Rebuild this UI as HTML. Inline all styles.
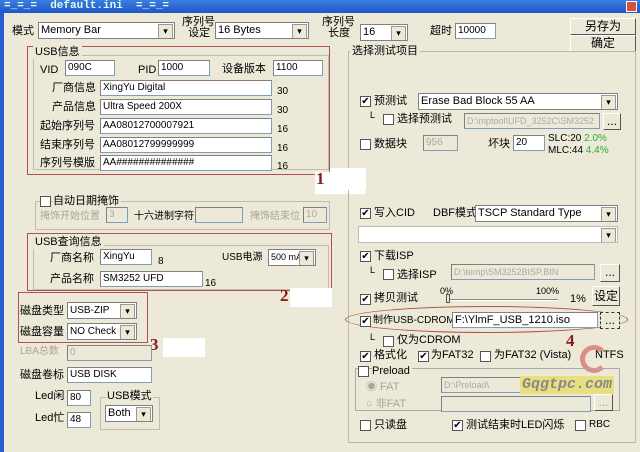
<!DOCTYPE html><html><head><meta charset="utf-8"><style>
*{box-sizing:border-box;margin:0;padding:0}
body{width:640px;height:452px;background:#ece9d8;position:relative;overflow:hidden;font-family:"Liberation Sans","Noto Sans CJK SC",sans-serif;font-size:11px;color:#000}
div,span{position:absolute}
.t{white-space:nowrap;line-height:14px}
.in{background:#fff;border:1px solid #7f9db9;border-top-color:#808080;border-left-color:#808080;height:16px;padding-left:2px;line-height:14px;font-size:10px;white-space:nowrap;overflow:hidden}
.dis{background:#ece9d8;color:#aaa}
.sel{background:#fff;border:1px solid #808080;height:17px;padding-left:2px;line-height:15px;font-size:11px;white-space:nowrap;overflow:hidden}
.sel:after{content:"▾";position:absolute;right:1px;top:1px;width:13px;height:13px;background:#ece9d8;border:1px solid #999;font-size:9px;line-height:12px;text-align:center}
.cb{width:11px;height:11px;border:1px solid #555;background:#fff;font-size:10px;line-height:9px;text-align:center}
.btn{background:#ece9d8;border:1px solid #fff;border-right-color:#555;border-bottom-color:#555;text-align:center;line-height:14px;font-size:12px}
.grp{border:1px solid #c0bcae}
.red{border:1px solid #b05050}
.num{color:#8b1a1a;font-family:"Liberation Serif",serif;font-size:17px;font-weight:bold}
.g{color:#a8a69c}
</style></head><body>
<div style="left:0;top:0;width:640px;height:13px;background:linear-gradient(#3a7fe0,#1f56c8)"></div>
<div class="t" style="left:4px;top:0;color:#dfe;font-family:'Liberation Mono',monospace;font-weight:bold;font-size:11px;line-height:12px">=_=_=&nbsp;&nbsp;default.ini&nbsp;&nbsp;=_=_=</div>
<div style="left:626px;top:1px;width:11px;height:11px;background:#d85040;border:1px solid #fff"></div>
<div style="left:0;top:13px;width:4px;height:439px;background:#2a5bd0"></div>

<div class="t" style="left:12px;top:24px">模式</div>
<div class="sel" style="left:38px;top:22px;width:137px">Memory Bar</div>
<div class="t" style="left:182px;top:17px;line-height:11px">序列号<br>&nbsp;&nbsp;设定</div>
<div class="sel" style="left:215px;top:22px;width:94px">16 Bytes</div>
<div class="t" style="left:322px;top:17px;line-height:11px">序列号<br>&nbsp;&nbsp;长度</div>
<div class="sel" style="left:360px;top:24px;width:48px">16</div>
<div class="t" style="left:430px;top:24px">超时</div>
<div class="in" style="left:455px;top:23px;width:41px">10000</div>
<div class="btn" style="left:570px;top:18px;width:66px;height:17px">另存为</div>
<div class="btn" style="left:570px;top:35px;width:66px;height:17px">确定</div>

<div class="grp" style="left:33px;top:55px;width:296px;height:115px"></div>
<div class="red" style="left:27px;top:46px;width:303px;height:129px"></div>
<div class="t" style="left:33px;top:45px;background:#ece9d8;padding:0 2px">USB信息</div>
<div class="t" style="left:40px;top:63px">VID</div><div class="in" style="left:65px;top:60px;width:50px">090C</div>
<div class="t" style="left:138px;top:63px">PID</div><div class="in" style="left:158px;top:60px;width:52px">1000</div>
<div class="t" style="left:222px;top:62px">设备版本</div><div class="in" style="left:273px;top:60px;width:50px">1100</div>
<div class="t" style="left:52px;top:81px">厂商信息</div><div class="in" style="left:100px;top:80px;width:172px">XingYu Digital</div><div class="t" style="left:277px;top:85px;font-size:10px">30</div>
<div class="t" style="left:52px;top:100px">产品信息</div><div class="in" style="left:100px;top:99px;width:172px">Ultra Speed 200X</div><div class="t" style="left:277px;top:104px;font-size:10px">30</div>
<div class="t" style="left:40px;top:119px">起始序列号</div><div class="in" style="left:100px;top:118px;width:172px">AA08012700007921</div><div class="t" style="left:277px;top:123px;font-size:10px">16</div>
<div class="t" style="left:40px;top:138px">结束序列号</div><div class="in" style="left:100px;top:137px;width:172px">AA08012799999999</div><div class="t" style="left:277px;top:142px;font-size:10px">16</div>
<div class="t" style="left:40px;top:156px">序列号模版</div><div class="in" style="left:100px;top:155px;width:172px">AA##############</div><div class="t" style="left:277px;top:160px;font-size:10px">16</div>
<div style="left:315px;top:172px;width:50px;height:22px;background:#fff"></div>
<div class="t num" style="left:316px;top:172px">1</div>

<div class="grp" style="left:35px;top:201px;width:295px;height:29px"></div>
<div class="cb" style="left:40px;top:196px"></div>
<div class="t" style="left:53px;top:194px;background:#ece9d8;padding-right:2px">自动日期掩饰</div>
<div class="t g" style="left:40px;top:210px;font-size:10px">掩饰开始位置</div><div class="in dis" style="left:106px;top:207px;width:22px">3</div>
<div class="t" style="left:134px;top:210px;font-size:10px">十六进制字符</div><div class="in dis" style="left:195px;top:207px;width:48px"></div>
<div class="t g" style="left:250px;top:210px;font-size:10px">掩饰结束位</div><div class="in dis" style="left:303px;top:207px;width:24px">10</div>

<div class="grp" style="left:33px;top:245px;width:296px;height:45px"></div>
<div class="red" style="left:27px;top:233px;width:305px;height:58px"></div>
<div class="t" style="left:33px;top:235px;background:#ece9d8;padding:0 2px">USB查询信息</div>
<div class="t" style="left:50px;top:251px">厂商名称</div><div class="in" style="left:100px;top:249px;width:52px">XingYu</div><div class="t" style="left:158px;top:255px;font-size:10px">8</div>
<div class="t" style="left:222px;top:251px;font-size:10px">USB电源</div><div class="sel" style="left:268px;top:249px;width:48px;font-size:9px">500 mA</div>
<div class="t" style="left:50px;top:272px">产品名称</div><div class="in" style="left:100px;top:271px;width:103px">SM3252 UFD</div><div class="t" style="left:205px;top:277px;font-size:10px">16</div>
<div style="left:290px;top:288px;width:42px;height:19px;background:#fff"></div>
<div class="t num" style="left:280px;top:289px">2</div>

<div class="red" style="left:18px;top:292px;width:130px;height:51px"></div>
<div class="t" style="left:20px;top:304px">磁盘类型</div><div class="sel" style="left:67px;top:302px;width:70px;font-size:10px">USB-ZIP</div>
<div class="t" style="left:20px;top:325px">磁盘容量</div><div class="sel" style="left:67px;top:323px;width:70px;font-size:10px">NO Check</div>
<div style="left:163px;top:338px;width:42px;height:19px;background:#fff"></div>
<div class="t num" style="left:150px;top:338px">3</div>
<div class="t g" style="left:20px;top:345px;font-size:10px">LBA总数</div><div class="in dis" style="left:67px;top:345px;width:85px">0</div>
<div class="t" style="left:20px;top:368px">磁盘卷标</div><div class="in" style="left:67px;top:367px;width:85px">USB DISK</div>
<div class="t" style="left:35px;top:389px">Led闲</div><div class="in" style="left:67px;top:390px;width:24px">80</div>
<div class="t" style="left:35px;top:411px">Led忙</div><div class="in" style="left:67px;top:412px;width:24px">48</div>
<div class="grp" style="left:100px;top:397px;width:60px;height:33px"></div>
<div class="t" style="left:106px;top:389px;background:#ece9d8;padding:0 1px">USB模式</div>
<div class="sel" style="left:105px;top:405px;width:48px">Both</div>

<div class="grp" style="left:348px;top:51px;width:288px;height:392px;border-color:#bbb8a8"></div>
<div class="t" style="left:350px;top:44px;background:#ece9d8;padding:0 2px">选择测试项目</div>
<div class="cb" style="left:360px;top:96px">✔</div><div class="t" style="left:374px;top:94px">预测试</div>
<div class="sel" style="left:418px;top:93px;width:200px">Erase Bad Block 55 AA</div>
<div class="t" style="left:370px;top:108px;font-size:9px">L</div><div class="cb" style="left:383px;top:114px"></div><div class="t" style="left:397px;top:112px">选择预测试</div>
<div class="in dis" style="left:464px;top:113px;width:136px;font-size:9px">D:\mptool\UFD_3252C\SM3252</div>
<div class="btn" style="left:603px;top:113px;width:18px;height:17px">...</div>
<div class="cb" style="left:360px;top:139px"></div><div class="t" style="left:374px;top:137px">数据块</div>
<div class="in dis" style="left:423px;top:135px;width:35px">956</div>
<div class="t" style="left:488px;top:137px">坏块</div><div class="in" style="left:513px;top:135px;width:32px">20</div>
<div class="t" style="left:548px;top:133px;font-size:10px;line-height:12px">SLC:20 <span style="position:static;color:#3a3">2.0%</span><br>MLC:44 <span style="position:static;color:#3a3">4.4%</span></div>
<div style="left:330px;top:168px;width:36px;height:22px;background:#fff"></div>

<div class="cb" style="left:360px;top:208px">✔</div><div class="t" style="left:374px;top:206px">写入CID</div>
<div class="t" style="left:433px;top:206px">DBF模式</div><div class="sel" style="left:475px;top:205px;width:143px">TSCP Standard Type</div>
<div class="sel" style="left:358px;top:226px;width:260px;border-color:#bbb"></div>
<div class="cb" style="left:360px;top:251px">✔</div><div class="t" style="left:374px;top:249px">下载ISP</div>
<div class="t" style="left:370px;top:263px;font-size:9px">L</div><div class="cb" style="left:383px;top:269px"></div><div class="t" style="left:397px;top:268px">选择ISP</div>
<div class="in dis" style="left:451px;top:264px;width:144px;font-size:9px">D:\temp\SM3252BISP.BIN</div>
<div class="btn" style="left:600px;top:264px;width:20px;height:18px">...</div>
<div class="cb" style="left:360px;top:294px">✔</div><div class="t" style="left:374px;top:291px">拷贝测试</div>
<div class="t" style="left:440px;top:284px;font-size:9px">0%</div><div class="t" style="left:536px;top:284px;font-size:9px">100%</div>
<div style="left:446px;top:299px;width:112px;height:2px;border-top:1px solid #888;border-bottom:1px solid #fff"></div>
<div style="left:446px;top:294px;width:4px;height:9px;background:#ece9d8;border:1px solid #555"></div>
<div class="t" style="left:570px;top:292px">1%</div>
<div class="btn" style="left:592px;top:286px;width:28px;height:20px;line-height:18px">设定</div>
<div style="left:345px;top:306px;width:283px;height:27px;border:1px solid #b05050;border-radius:50%"></div>
<div class="cb" style="left:360px;top:316px">✔</div><div class="t" style="left:373px;top:314px;font-size:10px">制作USB-CDROM</div>
<div class="in" style="left:452px;top:312px;width:146px;font-size:11px">F:\YlmF_USB_1210.iso</div>
<div class="btn" style="left:600px;top:312px;width:20px;height:17px;border:1px dashed #333">...</div>
<div class="t" style="left:370px;top:330px;font-size:9px">L</div><div class="cb" style="left:383px;top:336px"></div><div class="t" style="left:397px;top:333px">仅为CDROM</div>
<div class="t num" style="left:566px;top:334px">4</div>
<div class="cb" style="left:360px;top:351px">✔</div><div class="t" style="left:374px;top:348px">格式化</div>
<div class="cb" style="left:418px;top:351px">✔</div><div class="t" style="left:431px;top:348px">为FAT32</div>
<div class="cb" style="left:480px;top:351px"></div><div class="t" style="left:494px;top:348px">为FAT32 (Vista)</div>
<div class="t" style="left:595px;top:348px">NTFS</div>
<div style="left:580px;top:345px;width:28px;height:28px;border:5px solid #d85050;border-radius:50%;border-right-color:transparent;opacity:.6"></div>
<div class="grp" style="left:355px;top:368px;width:265px;height:43px;border-color:#aaa"></div>
<div class="cb" style="left:358px;top:366px"></div><div class="t" style="left:372px;top:364px;background:#ece9d8;padding-right:2px">Preload</div>
<div class="t g" style="left:366px;top:380px">◉ FAT</div><div class="t g" style="left:366px;top:397px">○ 非FAT</div>
<div class="in dis" style="left:441px;top:377px;width:156px;font-size:9px">D:\Preload\</div>
<div class="in dis" style="left:441px;top:396px;width:150px"></div>
<div class="btn" style="left:594px;top:394px;width:19px;height:17px;color:#999">...</div>
<div class="t" style="left:520px;top:376px;background:#e8e080;color:#888;font-weight:bold;font-style:italic;font-size:15px;line-height:18px;padding:0 2px;font-family:'Liberation Mono',monospace">Gqgtpc.com</div>
<div class="cb" style="left:360px;top:420px"></div><div class="t" style="left:374px;top:418px">只读盘</div>
<div class="cb" style="left:452px;top:420px">✔</div><div class="t" style="left:466px;top:418px">测试结束时LED闪烁</div>
<div class="cb" style="left:575px;top:420px"></div><div class="t" style="left:589px;top:418px;font-size:10px">RBC</div>
</body></html>
